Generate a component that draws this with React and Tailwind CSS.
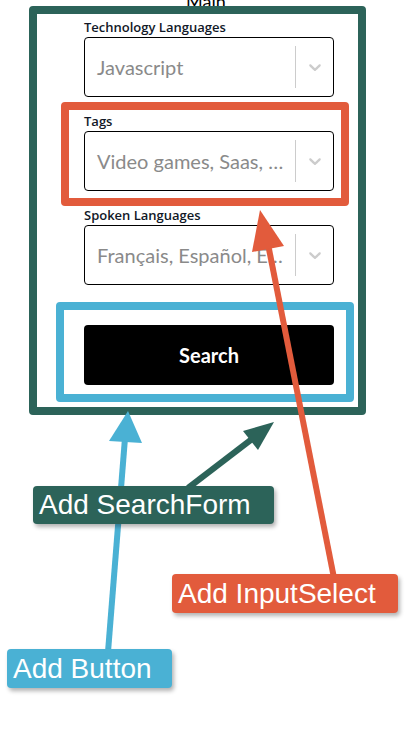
import React from "react";

const Chevron = () => (
  <svg viewBox="0 0 20 20" className="h-[20px] w-[20px] fill-[#cccccc]">
    <path d="M4.516 7.548c0.436-0.446 1.043-0.481 1.576 0l3.908 3.747 3.908-3.747c0.533-0.481 1.141-0.446 1.574 0 0.436 0.445 0.408 1.197 0 1.615-0.406 0.418-4.695 4.502-4.695 4.502-0.217 0.223-0.502 0.335-0.787 0.335s-0.57-0.112-0.789-0.335c0 0-4.287-4.084-4.695-4.502s-0.436-1.17 0-1.615z" />
  </svg>
);

const InputSelect = ({ label, value }) => (
  <div>
    <p
      className="h-[16px] text-[13px] leading-[16px] font-semibold text-[#111827]"
      style={{ fontFamily: "'Open Sans', sans-serif" }}
    >
      {label}
    </p>
    <div className="mt-[2px] flex h-[60px] items-center rounded-[4px] border border-black bg-white">
      <span className="min-w-0 flex-1 truncate pl-[12px] pr-[8px] text-[20px] text-[#8a8a8a]">
        {value}
      </span>
      <span className="h-[42px] w-px bg-[#cccccc]" />
      <span className="flex w-[37px] items-center justify-center">
        <Chevron />
      </span>
    </div>
  </div>
);

const Tag = ({ text, className }) => (
  <div
    className={`absolute flex items-center rounded-[4px] pl-[6px] text-[28px] leading-none text-white shadow-[2px_3px_4px_rgba(0,0,0,0.3)] ${className}`}
    style={{ fontFamily: "'Liberation Sans', Arial, sans-serif" }}
  >
    {text}
  </div>
);

export default function App() {
  return (
    <div
      className="relative h-[739px] w-[418px] overflow-hidden bg-white"
      style={{ fontFamily: "Lato, 'Noto Sans', sans-serif" }}
    >
      <p className="absolute left-[186px] top-[-12px] text-[18px] text-black">Main</p>

      {/* search form */}
      <div className="ml-[84px] w-[250px] pt-[19px]">
        <div className="flex flex-col gap-[16px]">
          <InputSelect label="Technology Languages" value="Javascript" />
          <InputSelect label="Tags" value="Video games, Saas, Marketplace" />
          <InputSelect label="Spoken Languages" value="Français, Español, English" />
        </div>
        <button className="mt-[40px] flex h-[60px] w-full items-center justify-center rounded-[4px] bg-black text-[20px] font-bold text-white">
          Search
        </button>
      </div>

      {/* annotation boxes */}
      <div className="absolute left-[29px] top-[6px] h-[409px] w-[337px] rounded-[4px] border-[8px] border-[#2c6359]" />
      <div className="absolute left-[61px] top-[102px] h-[104px] w-[288px] rounded-[4px] border-[8px] border-[#e25b3c]" />
      <div className="absolute left-[56px] top-[302px] h-[100px] w-[298px] rounded-[4px] border-[8px] border-[#4ab1d4]" />

      {/* arrows */}
      <svg className="absolute left-0 top-0" width="418" height="739" viewBox="0 0 418 739">
        <line x1="108" y1="652" x2="125" y2="438" stroke="#4ab1d4" strokeWidth="6" />
        <polygon points="128,411 142,443 109,441" fill="#4ab1d4" />
        <line x1="188" y1="488" x2="252" y2="439" stroke="#2c6359" strokeWidth="6" />
        <polygon points="274,422 258,450 243,431" fill="#2c6359" />
        <line x1="334" y1="578" x2="268" y2="244" stroke="#e25b3c" strokeWidth="6" />
        <polygon points="260,210 284,246 252,252" fill="#e25b3c" />
      </svg>

      <Tag text="Add SearchForm" className="left-[33px] top-[486px] h-[38px] w-[241px] bg-[#2c6359]" />
      <Tag text="Add InputSelect" className="left-[172px] top-[574px] h-[39px] w-[226px] bg-[#e25b3c]" />
      <Tag text="Add Button" className="left-[7px] top-[649px] h-[39px] w-[165px] bg-[#4ab1d4]" />
    </div>
  );
}
